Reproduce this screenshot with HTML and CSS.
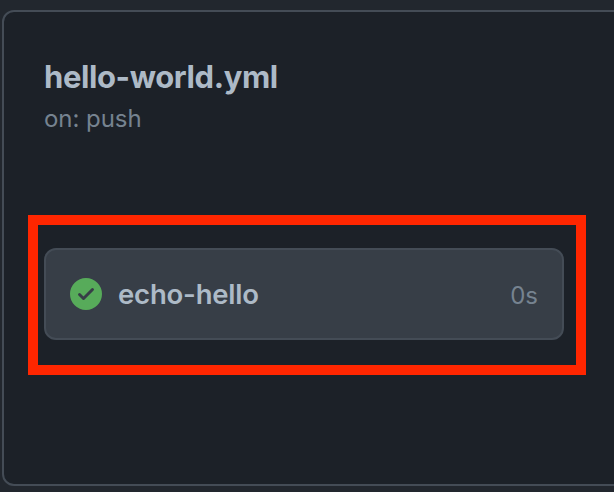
FILE: index.html
```html
<!DOCTYPE html>
<html lang="en">
<head>
<meta charset="utf-8">
<title>hello-world.yml</title>
<link rel="stylesheet" href="styles.css">
</head>
<body>
<main class="workflow">
  <h1 class="title">hello-world.yml</h1>
  <p class="trigger">on: push</p>
  <section class="highlight">
    <div class="job">
      <svg class="status" viewBox="0 0 16 16" aria-hidden="true"><path fill="#57ab5a" fill-rule="evenodd" d="M8 16A8 8 0 108 0a8 8 0 000 16zm3.78-9.72a.75.75 0 00-1.06-1.06L6.75 9.19 5.28 7.72a.75.75 0 00-1.06 1.06l2 2a.75.75 0 001.06 0l4.5-4.5z"/></svg>
      <span class="name">echo-hello</span>
      <span class="time">0s</span>
    </div>
  </section>
</main>
</body>
</html>
```
FILE: styles.css
```css
* { box-sizing: border-box; }
body {
  margin: 0;
  height: 492px;
  padding: 10px 0 6px 2px;
  overflow: hidden;
  background: #22272e;
  font-family: Inter, "Liberation Sans", sans-serif;
}
.workflow {
  width: 640px;
  height: 476px;
  padding: 45px 0 0 24px;
  border: 2px solid #444c56;
  border-radius: 12px;
  background: #1c2128;
}
.title {
  margin: 0 0 0 16px;
  font-size: 31px;
  line-height: 40px;
  font-weight: 700;
  color: #adbac7;
  letter-spacing: -0.4px;
}
.trigger {
  margin: 6px 0 0 16px;
  font-size: 24px;
  line-height: 32px;
  color: #768390;
  letter-spacing: -0.05px;
}
.highlight {
  width: 558px;
  height: 160px;
  margin-top: 80px;
  padding: 23px 12px 0 6px;
  border: 10px solid #ff2600;
}
.job {
  display: flex;
  align-items: center;
  height: 92px;
  padding: 0 24px;
  border: 2px solid #444c56;
  border-radius: 12px;
  background: #373e47;
}
.status { width: 32px; height: 32px; }
.name {
  margin-left: 16px;
  font-size: 27.5px;
  font-weight: 600;
  color: #adbac7;
  letter-spacing: -0.2px;
}
.time {
  margin: 2px 0 0 auto;
  font-size: 24px;
  color: #768390;
}
```
